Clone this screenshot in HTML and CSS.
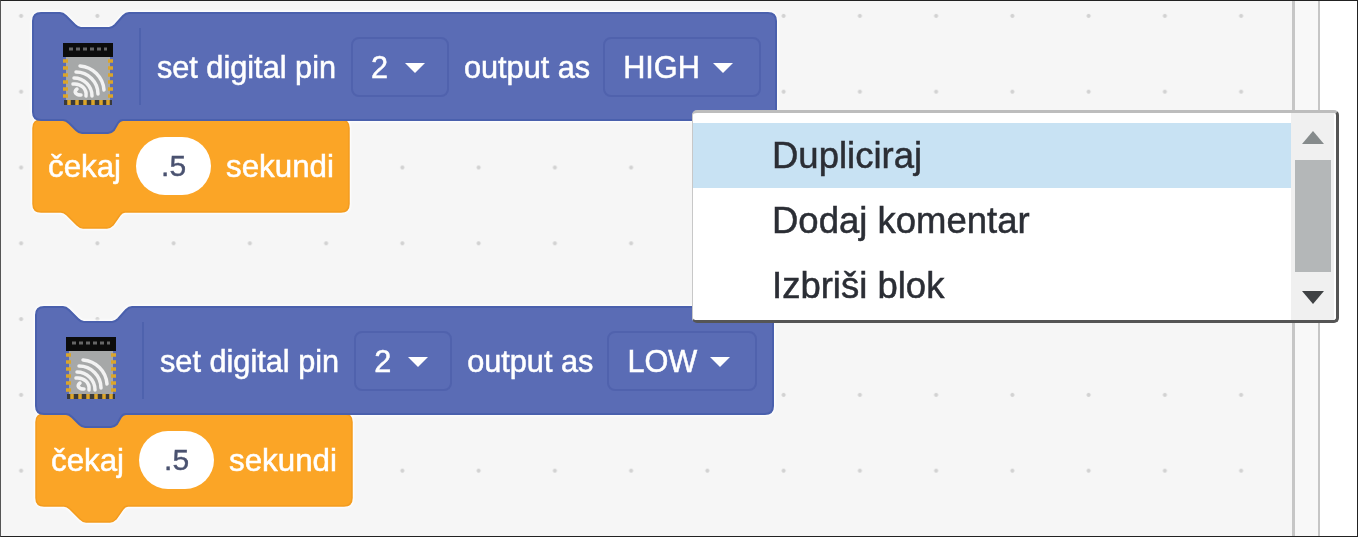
FILE: index.html
```html
<!DOCTYPE html>
<html lang="en">
<head>
    <meta charset="UTF-8">
    <meta name="viewport" content="width=device-width, initial-scale=1.0">
    <title>Blocks</title>
    <link rel="stylesheet" href="styles.css">
</head>
<body>
    <div class="frame">
        <div class="workspace">

            <!-- First stack -->
            <div class="stack stack-one">
                <div class="block block-blue width-high">
                    <svg class="shape" width="743" height="122" viewBox="0 0 743 122">
                        <path d="M0 8Q0 0 8 0H27Q30 0 33 3L42 12Q45 15 48 15H76Q79 15 82 12L90 3Q93 0 96 0H735Q743 0 743 8V99Q743 107 735 107H90Q87 107 85 110L81 117Q78 120 75 120H49Q46 120 43 117L36 110Q33 107 30 107H8Q0 107 0 99Z"/>
                    </svg>
                    <div class="chip-cell">
                        <svg class="chip" width="50" height="62" viewBox="0 0 50 62">
                            <rect x="0" y="0" width="50" height="14" fill="#0c0c0c"/>
                            <path d="M6 6h38" stroke="#666" stroke-width="3" stroke-dasharray="4 3"/>
                            <rect x="3" y="14" width="44" height="44" fill="#a6a8a8"/>
                            <path d="M0 18h5M0 25h5M0 32h5M0 39h5M0 46h5M0 53h5M45 18h5M45 25h5M45 32h5M45 39h5M45 46h5M45 53h5" stroke="#dba52a" stroke-width="3.5"/>
                            <rect x="1" y="57" width="48" height="5" fill="#3a3a3a"/>
                            <path d="M6 62v-5M14 62v-5M22 62v-5M30 62v-5M38 62v-5M45 62v-5" stroke="#dba52a" stroke-width="3.5"/>
                            <path d="M17 23A26 26 0 0 1 41 47M13 29A22 22 0 0 1 35 51M11 35A18 18 0 0 1 29 53M10 41C18 40 24 46 23 53M14 46C10 49 13 52 18 52" fill="none" stroke="#f2f2f2" stroke-width="3.5" stroke-linecap="round"/>
                        </svg>
                    </div>
                    <span class="label">set digital pin</span>
                    <div class="field field-pin"><span>2</span><i class="caret"></i></div>
                    <span class="label">output as</span>
                    <div class="field field-high"><span>HIGH</span><i class="caret"></i></div>
                </div>
                <div class="block block-orange">
                    <svg class="shape" width="316" height="108" viewBox="0 0 316 108">
                        <path d="M0 8Q0 0 8 0H308Q316 0 316 8V84Q316 92 308 92H92Q89 92 87 95L80 105Q77 108 74 108H50Q47 108 44 105L34 95Q31 92 28 92H8Q0 92 0 84Z"/>
                    </svg>
                    <span class="label">čekaj</span>
                    <div class="value">.5</div>
                    <span class="label">sekundi</span>
                </div>
            </div>

            <!-- Second stack -->
            <div class="stack stack-two">
                <div class="block block-blue width-low">
                    <svg class="shape" width="737" height="122" viewBox="0 0 737 122">
                        <path d="M0 8Q0 0 8 0H27Q30 0 33 3L42 12Q45 15 48 15H76Q79 15 82 12L90 3Q93 0 96 0H729Q737 0 737 8V99Q737 107 729 107H90Q87 107 85 110L81 117Q78 120 75 120H49Q46 120 43 117L36 110Q33 107 30 107H8Q0 107 0 99Z"/>
                    </svg>
                    <div class="chip-cell">
                        <svg class="chip" width="50" height="62" viewBox="0 0 50 62">
                            <rect x="0" y="0" width="50" height="14" fill="#0c0c0c"/>
                            <path d="M6 6h38" stroke="#666" stroke-width="3" stroke-dasharray="4 3"/>
                            <rect x="3" y="14" width="44" height="44" fill="#a6a8a8"/>
                            <path d="M0 18h5M0 25h5M0 32h5M0 39h5M0 46h5M0 53h5M45 18h5M45 25h5M45 32h5M45 39h5M45 46h5M45 53h5" stroke="#dba52a" stroke-width="3.5"/>
                            <rect x="1" y="57" width="48" height="5" fill="#3a3a3a"/>
                            <path d="M6 62v-5M14 62v-5M22 62v-5M30 62v-5M38 62v-5M45 62v-5" stroke="#dba52a" stroke-width="3.5"/>
                            <path d="M17 23A26 26 0 0 1 41 47M13 29A22 22 0 0 1 35 51M11 35A18 18 0 0 1 29 53M10 41C18 40 24 46 23 53M14 46C10 49 13 52 18 52" fill="none" stroke="#f2f2f2" stroke-width="3.5" stroke-linecap="round"/>
                        </svg>
                    </div>
                    <span class="label">set digital pin</span>
                    <div class="field field-pin"><span>2</span><i class="caret"></i></div>
                    <span class="label">output as</span>
                    <div class="field field-low"><span>LOW</span><i class="caret"></i></div>
                </div>
                <div class="block block-orange">
                    <svg class="shape" width="316" height="108" viewBox="0 0 316 108">
                        <path d="M0 8Q0 0 8 0H308Q316 0 316 8V84Q316 92 308 92H92Q89 92 87 95L80 105Q77 108 74 108H50Q47 108 44 105L34 95Q31 92 28 92H8Q0 92 0 84Z"/>
                    </svg>
                    <span class="label">čekaj</span>
                    <div class="value">.5</div>
                    <span class="label">sekundi</span>
                </div>
            </div>
        </div>
        <div class="strip"></div>
        <div class="side"></div>

        <!-- Context menu -->
        <div class="menu">
            <div class="menu-list">
                <div class="menu-item active">Dupliciraj</div>
                <div class="menu-item">Dodaj komentar</div>
                <div class="menu-item">Izbriši blok</div>
            </div>
            <div class="scrollbar">
                <i class="arrow arrow-up"></i>
                <div class="thumb"></div>
                <i class="arrow arrow-down"></i>
            </div>
        </div>
    </div>
</body>
</html>
```

FILE: styles.css
```css
* {
    box-sizing: border-box;
}
html, body {
    margin: 0;
    overflow: hidden;
}
body {
    font-family: "Liberation Sans", Arial, sans-serif;
    background-color: #fff;
}
.frame {
    position: relative;
    display: flex;
    width: 1359px;
    height: 538px;
    padding: 1px;
    filter: blur(0.7px);
}
.frame::after {
    content: "";
    position: absolute;
    inset: 0 1px 1px 0;
    border: 1px solid #222;
    border-left-color: #555;
    pointer-events: none;
}
.workspace {
    position: relative;
    width: 1294px;
    border-right: 3px solid #c6c6c6;
    background-color: #f6f6f6;
    background-image: radial-gradient(circle, #d2d2d2 0, #d2d2d2 1.5px, transparent 2.5px);
    background-size: 76.25px 75.8px;
    background-position: -18px -23px;
}
.strip {
    width: 25px;
    border-right: 2px solid #c6c6c6;
    background-color: #f8f8f8;
}
.side {
    flex: 1;
    background-color: #fff;
}

/* block stacks sit freely on the canvas */
.stack {
    position: absolute;
    display: flex;
    flex-direction: column;
    align-items: flex-start;
    filter: drop-shadow(0 0 1.5px #fff) drop-shadow(0 0 1px #fff);
}
.stack-one {
    left: 32px;
    top: 12px;
}
.stack-two {
    left: 35px;
    top: 306px;
}
.block {
    position: relative;
    display: flex;
    align-items: center;
    color: #fff;
    font-size: 30.7px;
}
.block > * {
    position: relative;
}
.block .shape {
    position: absolute;
    left: 0;
    top: 0;
    overflow: visible;
}
.block-blue {
    z-index: 2;
    height: 107px;
}
.width-high {
    width: 743px;
}
.width-low {
    width: 737px;
}
.block-blue .shape path {
    fill: #5a6cb5;
    stroke: #4a60ad;
    stroke-width: 2;
}
.block-orange {
    z-index: 1;
    width: 316px;
    height: 92px;
    padding-left: 15px;
    gap: 15px;
    font-size: 31.3px;
}
.block-orange .shape path {
    fill: #fba526;
    stroke: #f39c1f;
    stroke-width: 1.5;
}
.label {
    padding-top: 2px;
    -webkit-text-stroke: 0.5px #fff;
    white-space: nowrap;
}
.chip-cell {
    display: flex;
    align-items: flex-end;
    width: 108px;
    height: 77px;
    margin-right: 16px;
    padding-left: 30px;
    border-right: 2px solid #4e62ad;
}
.chip {
    flex: none;
    filter: blur(0.6px);
}
.field {
    display: flex;
    align-items: center;
    gap: 17px;
    height: 60px;
    margin: 0 15px;
    padding: 2px 0 0 18px;
    border: 2px solid #5062ad;
    border-radius: 8px;
    -webkit-text-stroke: 0.5px #fff;
}
.field-pin {
    width: 98px;
}
.field-high {
    width: 158px;
    margin-left: 13px;
    gap: 13px;
}
.field-low {
    width: 150px;
    margin-left: 14px;
    gap: 13px;
}
.caret {
    width: 0;
    height: 0;
    border-left: 10px solid transparent;
    border-right: 10px solid transparent;
    border-top: 10px solid #fff;
}
.value {
    display: flex;
    align-items: center;
    justify-content: center;
    width: 75px;
    height: 58px;
    border-radius: 29px;
    background-color: #fff;
    color: #4a5270;
    font-size: 30px;
    -webkit-text-stroke: 0.4px #4a5270;
}

/* context menu lies over the blocks */
.menu {
    position: absolute;
    z-index: 5;
    left: 692px;
    top: 110px;
    display: flex;
    width: 647px;
    height: 213px;
    padding-right: 2px;
    border-top: 3px solid #bdbdbd;
    border-left: 1px solid #c8c8c8;
    border-right: 3px solid #555;
    border-bottom: 3px solid #555;
    border-radius: 5px;
    background-color: #fff;
    overflow: hidden;
}
.menu-list {
    flex: 1;
    padding-top: 10px;
}
.menu-item {
    height: 65px;
    padding-left: 79px;
    color: #2b2e35;
    font-size: 36.5px;
    line-height: 65px;
    white-space: nowrap;
    -webkit-text-stroke: 0.5px #2b2e35;
}
.menu-item.active {
    background-color: #c8e2f3;
}
.scrollbar {
    display: flex;
    flex-direction: column;
    align-items: center;
    width: 43px;
    padding-top: 18px;
    background-color: #f0f0f0;
}
.thumb {
    width: 36px;
    height: 112px;
    margin: 16px 0 19px;
    background-color: #b4b7b8;
}
.arrow {
    width: 0;
    height: 0;
    border-left: 11px solid transparent;
    border-right: 11px solid transparent;
}
.arrow-up {
    border-bottom: 13px solid #868b8c;
}
.arrow-down {
    border-top: 13px solid #3f4244;
}
```
